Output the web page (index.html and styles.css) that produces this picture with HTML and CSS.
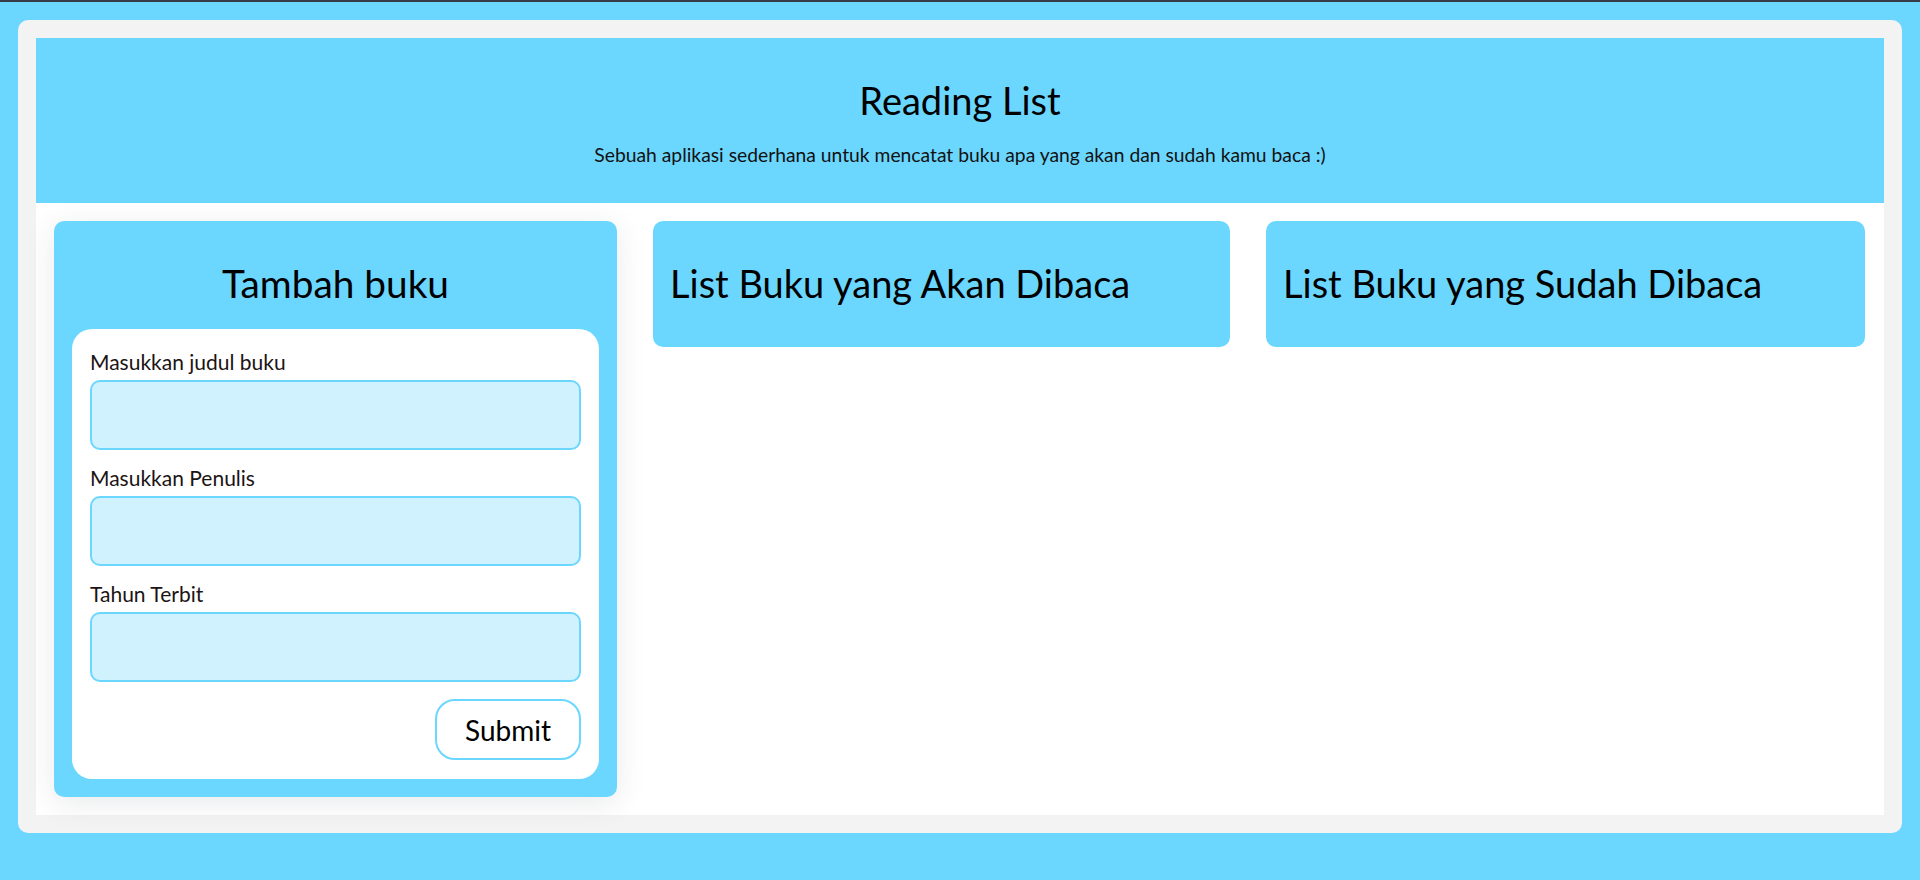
FILE: index.html
```html
<!DOCTYPE html>
<html lang="id">
<head>
<meta charset="utf-8">
<title>Reading List</title>
<link rel="stylesheet" href="styles.css">
</head>
<body>
<div class="app">
  <header class="hero">
    <h1 class="hero-title">Reading List</h1>
    <p class="hero-sub">Sebuah aplikasi sederhana untuk mencatat buku apa yang akan dan sudah kamu baca :)</p>
  </header>
  <main class="board">
    <section class="card card-input">
      <h2 class="card-title card-title-center">Tambah buku</h2>
      <form class="form">
        <div class="field">
          <label class="field-label" for="judul">Masukkan judul buku</label>
          <input class="field-input" id="judul" type="text">
        </div>
        <div class="field">
          <label class="field-label" for="penulis">Masukkan Penulis</label>
          <input class="field-input" id="penulis" type="text">
        </div>
        <div class="field field-last">
          <label class="field-label" for="tahun">Tahun Terbit</label>
          <input class="field-input" id="tahun" type="number">
        </div>
        <div class="form-actions">
          <button class="btn-submit" type="button">Submit</button>
        </div>
      </form>
    </section>
    <section class="card">
      <h2 class="card-title">List Buku yang Akan Dibaca</h2>
    </section>
    <section class="card">
      <h2 class="card-title">List Buku yang Sudah Dibaca</h2>
    </section>
  </main>
</div>
</body>
</html>
```

FILE: styles.css
```css
* { box-sizing: border-box; }

html, body {
  margin: 0;
  padding: 0;
}

body {
  background: #6bd7ff;
  border-top: 2px solid #373b47;
  height: 880px;
  padding: 18px;
  font-family: Lato, "Open Sans", sans-serif;
  color: #000;
}

.app {
  background: #f3f3f3;
  border-radius: 10px;
  padding: 18px;
}

.hero {
  background: #6bd7ff;
  height: 165px;
  padding-top: 39px;
  text-align: center;
}

.hero-title {
  margin: 0;
  font-size: 38px;
  line-height: 46px;
  font-weight: 400;
}

.hero-sub {
  margin: 21px 0 0;
  font-size: 19.3px;
  line-height: 22px;
  font-weight: 400;
  color: #111;
}

.board {
  background: #fff;
  padding: 18px;
  display: grid;
  grid-template-columns: 563px 577px 599px;
  gap: 36px;
  align-items: start;
}

.card {
  background: #6bd7ff;
  border-radius: 10px;
  padding: 18px;
}

.card-input {
  box-shadow: 0 6px 30px rgba(40, 50, 70, 0.10);
}

.card-title {
  margin: 21px 0 23px -1px;
  font-size: 38px;
  line-height: 46px;
  font-weight: 400;
}

.card-title-center {
  margin-left: 0;
  text-align: center;
  font-size: 38.8px;
}

.form {
  background: #fff;
  border-radius: 20px;
  padding: 21px 18px 19px;
}

.field {
  margin-bottom: 16px;
}

.field-last {
  margin-bottom: 0;
}

.field-label {
  display: block;
  font-size: 21px;
  line-height: 24px;
  margin-bottom: 6px;
  color: #1c1414;
}

.field-input {
  display: block;
  width: 100%;
  height: 70px;
  background: #d0f2fe;
  border: 2px solid #6bd7ff;
  border-radius: 10px;
  font-family: inherit;
  font-size: 20px;
  padding: 0 12px;
  outline: none;
}

.form-actions {
  display: flex;
  justify-content: flex-end;
  margin-top: 17px;
}

.btn-submit {
  width: 146px;
  height: 61px;
  background: #fff;
  border: 2px solid #6bd7ff;
  border-radius: 20px;
  font-family: inherit;
  font-size: 28px;
  color: #000;
  cursor: pointer;
}
```
